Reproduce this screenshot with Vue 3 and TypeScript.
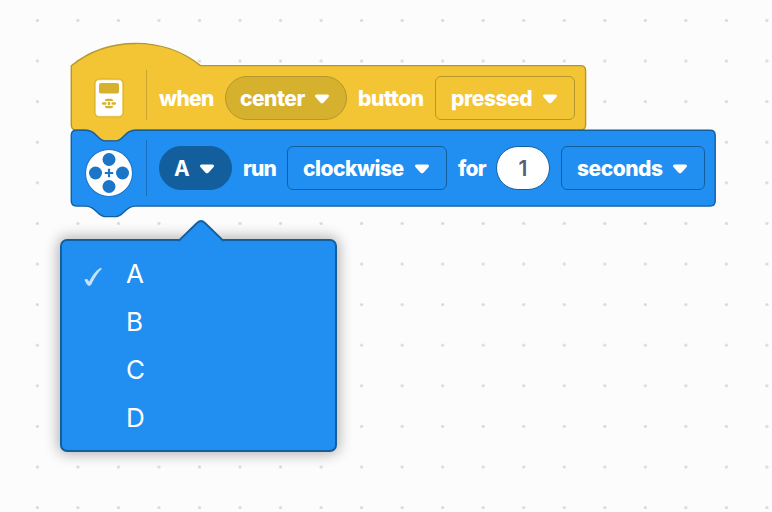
<script setup lang="ts">
import { ref } from 'vue'

const ports: string[] = ['A', 'B', 'C', 'D']
const selectedPort = ref<string>('A')
const menuOpen = ref<boolean>(true)

function choose(port: string): void {
  selectedPort.value = port
}
</script>

<template>
  <main class="workspace">
    <svg class="grid" width="772" height="512" aria-hidden="true">
      <defs>
        <pattern id="dots" x="17.1" y="0.1" width="40.53" height="40.6" patternUnits="userSpaceOnUse">
          <circle cx="20.3" cy="20.3" r="1.6" fill="#d9d9d9" />
        </pattern>
      </defs>
      <rect width="772" height="512" fill="url(#dots)" />
    </svg>

    <section class="block event">
      <svg class="shape" width="518" height="102" viewBox="0 0 518 102" aria-hidden="true">
        <path
          d="M1.3 23.8C37.5-6 93.5-6 130.5 23.6H510.5Q515.6 23.6 515.6 28.6V83Q515.6 88 510.5 88H65.5C59.5 88 57 91 54 94Q49.5 98.8 46 98.8H35Q31.5 98.8 27 94C24 91 21.5 88 15.5 88H6.3Q1.3 88 1.3 83Z"
          fill="#f3c433" stroke="#b5972c" stroke-width="1.4"
        />
      </svg>
      <div class="row">
        <div class="icon">
          <svg width="30" height="40" viewBox="0 0 30 40">
            <rect x=".2" y=".4" width="29.6" height="39.2" rx="5.4" fill="#d6b12d" />
            <rect x="1.2" y="1.4" width="27.6" height="37.2" rx="4.4" fill="#f6dc88" />
            <rect x="2" y="2.2" width="26" height="35.6" rx="3.4" fill="#fff" />
            <rect x="5" y="5" width="20" height="10.4" rx="2" fill="#d6b12d" />
            <g fill="#d6b12d">
              <path d="M12.6 20.8h4.8q1.4 0 1.8 2.2h-8.4q.4-2.2 1.8-2.2zM10.8 28h8.4q-.4 2.2-1.8 2.2h-4.8q-1.4 0-1.8-2.2z" />
              <path d="M8.8 24.3h3.4q.8 1.2 0 2.4h-3.4q-2-1.2 0-2.4zM21.2 24.3h-3.4q-.8 1.2 0 2.4h3.4q2-1.2 0-2.4z" />
              <rect x="13.9" y="23.8" width="2.2" height="3.4" rx=".7" />
            </g>
          </svg>
        </div>
        <span class="word when">when</span>
        <button class="field pill center">
          <span>center</span>
          <svg class="caret" width="16" height="12" viewBox="0 0 16 12"><path d="M2.8 1.5H13.2Q15.8 1.5 14.6 4L9.7 9.6Q8 11.2 6.3 9.6L1.4 4Q.2 1.5 2.8 1.5Z" /></svg>
        </button>
        <span class="word button-word">button</span>
        <button class="field box pressed">
          <span>pressed</span>
          <svg class="caret" width="16" height="12" viewBox="0 0 16 12"><path d="M2.8 1.5H13.2Q15.8 1.5 14.6 4L9.7 9.6Q8 11.2 6.3 9.6L1.4 4Q.2 1.5 2.8 1.5Z" /></svg>
        </button>
      </div>
    </section>

    <section class="block motor">
      <svg class="shape" width="647" height="90" viewBox="0 0 647 90" aria-hidden="true">
        <path
          d="M6.3 1.3H15.5C21.5 1.3 24 4 27 7Q31.5 11.9 35 11.9H46Q49.5 11.9 54 7C57 4 59.5 1.3 65.5 1.3H640.2Q645.2 1.3 645.2 6.3V72.1Q645.2 77.1 640.2 77.1H65.5C59.5 77.1 57 80 54 83Q49.5 87.6 46 87.6H35Q31.5 87.6 27 83C24 80 21.5 77.1 15.5 77.1H6.3Q1.3 77.1 1.3 72.1V6.3Q1.3 1.3 6.3 1.3Z"
          fill="#218ff1" stroke="#135f9e" stroke-width="1.4"
        />
      </svg>
      <div class="row">
        <div class="icon">
          <svg width="50" height="50" viewBox="0 0 50 50">
            <circle cx="25" cy="25" r="23.5" fill="#fff" stroke="#1b75c8" stroke-width="1.1" />
            <g fill="#1b75c8">
              <circle cx="25" cy="11.5" r="6.5" />
              <circle cx="38.5" cy="25" r="6.5" />
              <circle cx="25" cy="38.5" r="6.5" />
              <circle cx="11.5" cy="25" r="6.5" />
            </g>
            <path d="M25 20.8V29.2M20.8 25H29.2" stroke="#1b75c8" stroke-width="2.2" />
          </svg>
        </div>
        <button class="field pill port" @click="menuOpen = !menuOpen">
          <span>{{ selectedPort }}</span>
          <svg class="caret" width="16" height="12" viewBox="0 0 16 12"><path d="M2.8 1.5H13.2Q15.8 1.5 14.6 4L9.7 9.6Q8 11.2 6.3 9.6L1.4 4Q.2 1.5 2.8 1.5Z" /></svg>
        </button>
        <span class="word run">run</span>
        <button class="field box clockwise">
          <span>clockwise</span>
          <svg class="caret" width="16" height="12" viewBox="0 0 16 12"><path d="M2.8 1.5H13.2Q15.8 1.5 14.6 4L9.7 9.6Q8 11.2 6.3 9.6L1.4 4Q.2 1.5 2.8 1.5Z" /></svg>
        </button>
        <span class="word for">for</span>
        <span class="field pill number">1</span>
        <button class="field box seconds">
          <span>seconds</span>
          <svg class="caret" width="16" height="12" viewBox="0 0 16 12"><path d="M2.8 1.5H13.2Q15.8 1.5 14.6 4L9.7 9.6Q8 11.2 6.3 9.6L1.4 4Q.2 1.5 2.8 1.5Z" /></svg>
        </button>
      </div>
    </section>

    <div v-if="menuOpen" class="menu">
      <svg class="arrow" width="48" height="23" viewBox="0 0 48 23" aria-hidden="true">
        <path d="M1.5 22L20 3Q24 -.9 28 3L46.5 22V23H1.5Z" fill="#218ff1" />
        <path d="M1.5 21L20 3Q24 -.9 28 3L46.5 21" fill="none" stroke="#135f9e" stroke-width="1.8" />
      </svg>
      <ul>
        <li v-for="port in ports" :key="port" @click="choose(port)">
          <span class="mark">
            <svg v-if="port === selectedPort" width="22" height="22" viewBox="0 0 22 22">
              <path d="M1.4 12.8Q3.3 11.4 4.8 12.5L6.1 14.8Q10.5 5.4 16.8 1.2Q18.4 .6 18.9 1.8Q13.3 7.1 8.5 17Q7.4 19.4 5.4 18.7Q3.3 17.4 1.4 12.8Z" fill="#e3f1fd" opacity=".85" />
            </svg>
          </span>
          <span>{{ port }}</span>
        </li>
      </ul>
    </div>
  </main>
</template>

<style>
body {
  margin: 0;
  overflow: hidden;
}
</style>

<style scoped>
.workspace {
  position: relative;
  width: 772px;
  height: 512px;
  overflow: hidden;
  background: #fcfcfc;
  font-family: Inter, "Open Sans", sans-serif;
}

.grid {
  display: block;
}

.block {
  position: absolute;
  left: 70px;
  color: #fff;
  font-size: 21px;
  font-weight: 800;
  line-height: 26px;
}

.event {
  top: 42px;
  width: 518px;
  height: 89px;
  --edge: #b5972c;
  --dark: #d6b12d;
}

.motor {
  top: 129px;
  width: 647px;
  height: 78px;
  --edge: #135f9e;
  --dark: #135f9e;
}

.shape {
  position: absolute;
  top: 0;
  left: 0;
}

.row {
  position: relative;
  display: flex;
  align-items: center;
  height: 44px;
}

.event .row {
  padding-top: 34px;
}

.motor .row {
  padding-top: 17px;
}

.icon {
  display: flex;
  flex: none;
  box-sizing: border-box;
  align-items: center;
  width: 77px;
  height: 50px;
  border-right: 1px solid color-mix(in srgb, var(--edge) 65%, transparent);
}

.event .icon {
  padding: 6px 0 0 24px;
  margin-top: -6px;
}

.motor .icon {
  height: 56px;
  padding: 10px 0 0 14px;
}

.word {
  flex: none;
  box-sizing: border-box;
  padding-top: 2px;
  white-space: nowrap;
}

.when {
  width: 78px;
  padding-left: 12px;
  letter-spacing: -0.7px;
}

.button-word {
  width: 88px;
  padding-left: 11px;
  letter-spacing: -0.4px;
}

.run {
  width: 55px;
  padding-left: 11px;
  letter-spacing: -0.8px;
}

.for {
  width: 49px;
  padding-left: 11px;
  letter-spacing: -0.7px;
}

.field {
  display: flex;
  flex: none;
  box-sizing: border-box;
  align-items: center;
  justify-content: space-between;
  height: 44px;
  padding: 2px 16px 0 15px;
  border: 1px solid var(--edge);
  background: transparent;
  color: inherit;
  font: inherit;
}

.pill {
  border-radius: 22px;
  background: var(--dark);
}

.box {
  border-radius: 6px;
}

.caret {
  flex: none;
  fill: #fff;
}

.center {
  width: 122px;
  padding-left: 14px;
  letter-spacing: -0.5px;
}

.pressed {
  width: 140px;
  letter-spacing: -0.45px;
}

.port {
  width: 73px;
  margin-left: 12px;
  padding-left: 14px;
  font-weight: 700;
}

.clockwise {
  width: 160px;
  letter-spacing: -0.5px;
}

.number {
  justify-content: center;
  width: 54px;
  padding: 2px 0 0;
  background: #fff;
  color: #575e75;
  font-weight: 600;
}

.seconds {
  width: 144px;
  margin-left: 11px;
  letter-spacing: -0.5px;
}

.menu {
  position: absolute;
  top: 239px;
  left: 60px;
  box-sizing: border-box;
  width: 277px;
  height: 213px;
  border: 2px solid #135f9e;
  border-radius: 7px;
  background: #218ff1;
  box-shadow: 0 0 14px 2px rgba(0, 0, 0, 0.3);
  color: #fff;
  font-size: 26px;
}

.arrow {
  position: absolute;
  top: -21px;
  left: 115px;
}

ul {
  display: flex;
  flex-direction: column;
  margin: 0;
  padding: 8px 0;
  list-style: none;
}

li {
  display: flex;
  align-items: center;
  height: 48px;
  cursor: pointer;
}

.mark {
  width: 43px;
  height: 22px;
  padding: 4px 0 0 21px;
}
</style>
